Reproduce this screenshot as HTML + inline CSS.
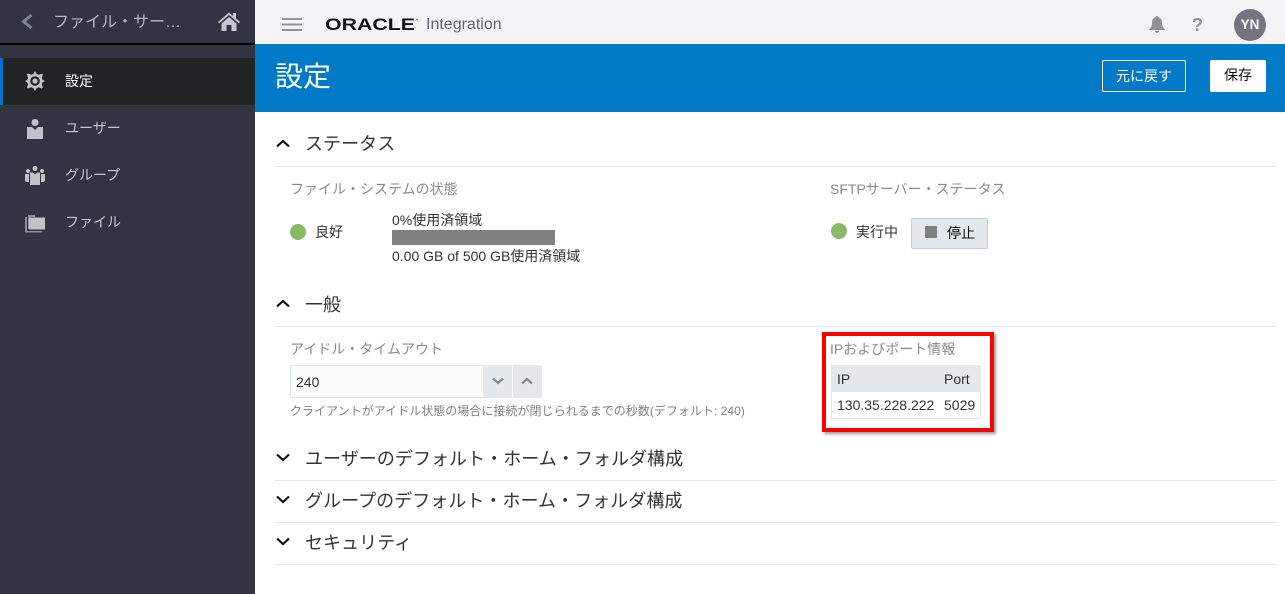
<!DOCTYPE html>
<html lang="ja"><head><meta charset="utf-8"><title>設定</title>
<style>
html,body{margin:0;padding:0;width:1285px;height:594px;overflow:hidden;background:#fff}
body{position:relative;font-family:"Liberation Sans","Noto Sans CJK JP",sans-serif;color:#333}
.a{position:absolute;white-space:nowrap;line-height:1}
svg{position:absolute;overflow:visible}
.l{position:absolute;left:275px;width:1001px;height:1px;background:#e3e5e6}
.h{font-size:18px;color:#333;letter-spacing:.05px}
.lb{font-size:14px;color:#8a8a8a}
.n{font-size:14px;color:#c4c8ce}
.dot{position:absolute;width:16px;height:16px;border-radius:50%;background:#8aba68}
</style></head><body>
<div class="a" style="left:0;top:0;width:255px;height:594px;background:#323541"></div>
<div class="a" style="left:0;top:43px;width:255px;height:2px;background:#000"></div>
<div class="a" style="left:0;top:58px;width:255px;height:47px;background:#202425"></div>
<div class="a" style="left:0;top:58px;width:3px;height:47px;background:#0572ce"></div>
<svg style="left:20px;top:14px" width="13" height="15" viewBox="0 0 13 15"><path d="M11.500 1L3.500 7.500l8 6.500" fill="none" stroke="#7d8590" stroke-width="3"/></svg>
<div class="a" style="left:53px;top:15px;font-size:16px;color:#b4b9c1">ファイル・サー…</div>
<svg style="left:218px;top:11px" width="22" height="21" viewBox="0 0 22 21"><path d="M0 11L11 1.500l4 3.400V2h3v5.500L22 11l-1.200 1.300L11 4 1.200 12.300z" fill="#c4c8ce"/><path d="M3.500 12.500L11 6l7.500 6.500V20h-5v-6h-5v6h-5z" fill="#c4c8ce"/></svg>

<svg style="left:25px;top:71px" width="20" height="20" viewBox="0 0 20 20"><path d="M10 0l1.600 3 2.300.8L17 2.600l.9.900-1.100 3.200.8 2L20 10l-2.400 1.300-.8 2 1.100 3.200-1.200 1.100-3.100-1.300-2 .9L10 20l-1.600-2.800-2.300-.9-3.100 1.300-1.100-1.100 1.200-3.200-.9-2L0 10l2.200-1.300.9-2-1.200-3.200 1-1 3.200 1.200 2.300-.8z" fill="#bfc3c9"/><circle cx="10" cy="10" r="4.800" fill="#202425"/><circle cx="10" cy="10" r="2.600" fill="#bfc3c9"/></svg>
<div class="a" style="left:65px;top:74px;font-size:14px;color:#fff">設定</div>
<svg style="left:27px;top:119px" width="16" height="20" viewBox="0 0 16 20"><circle cx="8" cy="3.500" r="3.500" fill="#bfc3c9"/><path d="M0 8h5l3 3 3-3h5v12H0z" fill="#bfc3c9"/></svg>
<div class="a n" style="left:65px;top:121px">ユーザー</div>
<svg style="left:25px;top:166px" width="20" height="20" viewBox="0 0 20 20"><circle cx="10" cy="2.500" r="2.500" fill="#bfc3c9"/><circle cx="3" cy="5" r="2" fill="#bfc3c9"/><circle cx="17" cy="5" r="2" fill="#bfc3c9"/><path d="M5 6.500h3l2 2 2-2h3V19H5z" fill="#bfc3c9"/><path d="M0 8h4v8H1.500L0 15zM16 8h4v7l-1.500 1H16z" fill="#bfc3c9"/></svg>
<div class="a n" style="left:65px;top:168px">グループ</div>
<svg style="left:25px;top:214px" width="20" height="19" viewBox="0 0 20 19"><path d="M0 3h2v14h15v1.500H0z" fill="#8e929a"/><path d="M3 1h7v2h-7zM3 3h1.500v12H3z" fill="#8e929a"/><path d="M4 3.500h16v12H4z" fill="#bfc3c9"/></svg>
<div class="a n" style="left:65px;top:215px">ファイル</div>

<div class="a" style="left:255px;top:0;width:1030px;height:44px;background:#f2f3f5"></div>
<div class="a" style="left:255px;top:44px;width:1030px;height:68px;background:#007ac6"></div>
<svg style="left:282px;top:18px" width="20" height="13" viewBox="0 0 20 13"><path d="M0 1h20M0 6.500h20M0 12h20" stroke="#949494" stroke-width="2"/></svg>
<svg style="left:325px;top:14px" width="95" height="20" viewBox="0 0 95 20"><text x="0" y="16.200" font-family="Liberation Sans" font-size="17" font-weight="700" fill="#111" textLength="90" lengthAdjust="spacingAndGlyphs">ORACLE</text><circle cx="92" cy="5.500" r="1" fill="#888"/></svg>
<div class="a" style="left:426px;top:17px;font-size:16px;color:#5f6670">Integration</div>
<svg style="left:1149px;top:16px" width="16" height="17" viewBox="0 0 16 17"><path d="M8 0c1 0 1.500.6 1.500 1.300C12 2 13 4 13 7c0 3 1 4.500 3 6.500v.5H0v-.5C2 11.500 3 10 3 7c0-3 1-5 3.500-5.700C6.500.6 7 0 8 0zM6 15h4c0 1-1 2-2 2s-2-1-2-2z" fill="#8e9294"/></svg>
<div class="a" style="left:1192px;top:16px;font-size:18px;font-weight:700;color:#8e9294">?</div>
<div class="a" style="left:1234px;top:9px;width:32px;height:32px;border-radius:50%;background:#74747f;color:#fff;font-size:13.500px;font-weight:700;line-height:32px;text-align:center">YN</div>
<div class="a" style="left:275px;top:63px;font-size:28px;color:#fff">設定</div>
<div class="a" style="left:1102px;top:60px;width:82px;height:30px;border:1px solid #fff;border-radius:2px;color:#fff;font-size:14px;line-height:30px;text-align:center">元に戻す</div>
<div class="a" style="left:1210px;top:60px;width:56px;height:32px;background:#fff;border-radius:2px;color:#111;font-size:14px;line-height:31px;text-align:center">保存</div>

<svg style="left:276px;top:139px" width="14" height="9" viewBox="0 0 14 9"><path d="M1 7.500L7 2l6 5.500" fill="none" stroke="#111" stroke-width="2.200"/></svg>
<div class="a h" style="left:305px;top:135px">ステータス</div>
<div class="l" style="top:166px"></div>
<div class="a lb" style="left:290px;top:182px">ファイル・システムの状態</div>
<div class="dot" style="left:290px;top:224px"></div>
<div class="a" style="left:315px;top:225px;font-size:14px">良好</div>
<div class="a" style="left:392px;top:213px;font-size:14px">0%使用済領域</div>
<div class="a" style="left:392px;top:230px;width:163px;height:15px;background:#808080"></div>
<div class="a" style="left:392px;top:249px;font-size:14px">0.00 GB of 500 GB使用済領域</div>
<div class="a lb" style="left:830px;top:182px">SFTPサーバー・ステータス</div>
<div class="dot" style="left:831px;top:223px"></div>
<div class="a" style="left:856px;top:225px;font-size:14px">実行中</div>
<div class="a" style="left:911px;top:218px;width:75px;height:29px;background:#e4e8ea;border:1px solid #c4ced7;border-radius:2px"></div>
<div class="a" style="left:925px;top:226px;width:12px;height:12px;background:#808080;border-radius:1px"></div>
<div class="a" style="left:947px;top:226px;font-size:14px;color:#111">停止</div>

<svg style="left:276px;top:299px" width="14" height="9" viewBox="0 0 14 9"><path d="M1 7.500L7 2l6 5.500" fill="none" stroke="#111" stroke-width="2.200"/></svg>
<div class="a h" style="left:305px;top:296px">一般</div>
<div class="l" style="top:326px"></div>
<div class="a lb" style="left:290px;top:342px">アイドル・タイムアウト</div>
<div class="a" style="left:290px;top:365px;width:192px;height:31px;background:#fcfcfc;border:1px solid #dfe4e7;border-radius:2px 0 0 2px"></div>
<div class="a" style="left:296px;top:375px;font-size:14px">240</div>
<div class="a" style="left:483px;top:365px;width:29px;height:33px;background:#e4e8ea"></div>
<div class="a" style="left:513px;top:365px;width:29px;height:33px;background:#e4e8ea;border-radius:0 2px 2px 0"></div>
<svg style="left:492px;top:377px" width="12" height="8" viewBox="0 0 12 8"><path d="M1 1.500L6 6l5-4.500" fill="none" stroke="#7f8a90" stroke-width="2.200"/></svg>
<svg style="left:521px;top:377px" width="12" height="8" viewBox="0 0 12 8"><path d="M1 6.500L6 2l5 4.500" fill="none" stroke="#7f8a90" stroke-width="2.200"/></svg>
<div class="a" style="left:290px;top:405px;font-size:12px;color:#7f7f7f;letter-spacing:.03px">クライアントがアイドル状態の場合に接続が閉じられるまでの秒数(デフォルト: 240)</div>

<div class="a" style="left:822px;top:332px;width:164px;height:92px;border:4px solid #f00;box-shadow:2px 2px 3px #999;background:#fff"></div>
<div class="a lb" style="left:830px;top:342px">IPおよびポート情報</div>
<div class="a" style="left:831px;top:365px;width:150px;height:27px;background:#e4e8ea"></div>
<div class="a" style="left:831px;top:392px;width:148px;height:26px;border:1px solid #e4e8ea;border-top:0"></div>
<div class="a" style="left:837px;top:372px;font-size:14px">IP</div>
<div class="a" style="left:944px;top:372px;font-size:14px">Port</div>
<div class="a" style="left:837px;top:398px;font-size:14px">130.35.228.222</div>
<div class="a" style="left:944px;top:398px;font-size:14px">5029</div>

<svg style="left:276px;top:453px" width="14" height="9" viewBox="0 0 14 9"><path d="M1 1.500L7 7l6-5.500" fill="none" stroke="#111" stroke-width="2.200"/></svg>
<div class="a h" style="left:305px;top:450px">ユーザーのデフォルト・ホーム・フォルダ構成</div>
<div class="l" style="top:480px"></div>
<svg style="left:276px;top:495px" width="14" height="9" viewBox="0 0 14 9"><path d="M1 1.500L7 7l6-5.500" fill="none" stroke="#111" stroke-width="2.200"/></svg>
<div class="a h" style="left:305px;top:492px">グループのデフォルト・ホーム・フォルダ構成</div>
<div class="l" style="top:522px"></div>
<svg style="left:276px;top:537px" width="14" height="9" viewBox="0 0 14 9"><path d="M1 1.500L7 7l6-5.500" fill="none" stroke="#111" stroke-width="2.200"/></svg>
<div class="a h" style="left:305px;top:534px">セキュリティ</div>
<div class="l" style="top:564px"></div>
</body></html>
